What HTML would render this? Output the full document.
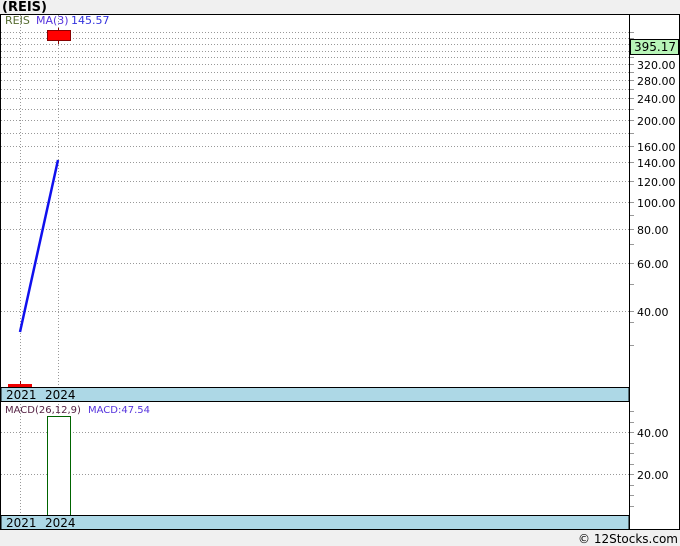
<!DOCTYPE html>
<html><head><meta charset="utf-8"><style>
html,body{margin:0;padding:0;background:#f0f0f0;}
svg{display:block;}
text{font-family:"DejaVu Sans","Liberation Sans",sans-serif;font-size:11px;}
</style></head><body>
<svg width="680" height="546" viewBox="0 0 680 546" xmlns="http://www.w3.org/2000/svg">
<rect x="0" y="0" width="680" height="546" fill="#f0f0f0"/>
<text x="2" y="11" style="font-size:13px;font-weight:bold" fill="#000">(REIS)</text>
<rect x="0.5" y="14.5" width="679" height="515" fill="#fff" stroke="#000"/>
<g stroke="#999" stroke-dasharray="1,2" stroke-width="1">
<line x1="1" x2="629" y1="32.5" y2="32.5"/><line x1="1" x2="629" y1="38.5" y2="38.5"/>
<line x1="1" x2="629" y1="44.5" y2="44.5"/><line x1="1" x2="629" y1="51.5" y2="51.5"/>
<line x1="1" x2="629" y1="57.5" y2="57.5"/><line x1="1" x2="629" y1="64.5" y2="64.5"/>
<line x1="1" x2="629" y1="72.5" y2="72.5"/><line x1="1" x2="629" y1="80.5" y2="80.5"/>
<line x1="1" x2="629" y1="89.5" y2="89.5"/><line x1="1" x2="629" y1="98.5" y2="98.5"/>
<line x1="1" x2="629" y1="109.5" y2="109.5"/><line x1="1" x2="629" y1="120.5" y2="120.5"/>
<line x1="1" x2="629" y1="133.5" y2="133.5"/><line x1="1" x2="629" y1="146.5" y2="146.5"/>
<line x1="1" x2="629" y1="162.5" y2="162.5"/><line x1="1" x2="629" y1="181.5" y2="181.5"/>
<line x1="1" x2="629" y1="202.5" y2="202.5"/><line x1="1" x2="629" y1="229.5" y2="229.5"/>
<line x1="1" x2="629" y1="263.5" y2="263.5"/><line x1="1" x2="629" y1="311.5" y2="311.5"/>
<line x1="1" x2="629" y1="432.5" y2="432.5"/><line x1="1" x2="629" y1="474.5" y2="474.5"/>
<line x1="20.5" x2="20.5" y1="15" y2="387"/><line x1="58.5" x2="58.5" y1="15" y2="387"/>
<line x1="20.5" x2="20.5" y1="401" y2="515"/><line x1="58.5" x2="58.5" y1="401" y2="515"/>
</g>
<g stroke="#999">
<path d="M629 32.5h5M629 38.5h5M629 44.5h5M629 51.5h5M629 57.5h5M629 64.5h5M629 72.5h5M629 80.5h5M629 89.5h5M629 98.5h5M629 109.5h5M629 120.5h5M629 133.5h5M629 146.5h5M629 162.5h5M629 181.5h5M629 202.5h5M629 215.5h5M629 229.5h5M629 244.5h5M629 263.5h5M629 284.5h5M629 311.5h5M629 345.5h5M629 322.5h5"/>
<path d="M629 411.5h5M629 422.5h5M629 432.5h5M629 443.5h5M629 453.5h5M629 464.5h5M629 474.5h5M629 485.5h5M629 495.5h5M629 506.5h5"/>
</g>
<line x1="629.5" y1="15" x2="629.5" y2="530" stroke="#000"/>
<text x="5" y="24" fill="#556b2f">REIS</text>
<text x="36" y="24" fill="#5533dd">MA(3)</text>
<text x="71" y="24" fill="#3333dd">145.57</text>
<line x1="58.5" y1="28" x2="58.5" y2="44" stroke="#800"/>
<rect x="47.5" y="30.5" width="23" height="10" fill="#f00" stroke="#800"/>
<line x1="20.5" y1="381" x2="20.5" y2="385" stroke="#800"/>
<rect x="8" y="384" width="24" height="3" fill="#e00"/>
<line x1="20" y1="332" x2="58" y2="160" stroke="#1010ee" stroke-width="2.5"/>
<rect x="630.5" y="39.5" width="48" height="15" fill="#b8f5b8" stroke="#000"/>
<text x="634" y="51" fill="#000" style="font-size:12px">395.17</text>
<g fill="#000" style="font-size:12px">
<text x="637" y="69">320.00</text><text x="637" y="85">280.00</text><text x="637" y="103">240.00</text>
<text x="637" y="125">200.00</text><text x="637" y="151">160.00</text><text x="637" y="167">140.00</text>
<text x="637" y="186">120.00</text><text x="637" y="207">100.00</text><text x="637" y="234">80.00</text>
<text x="637" y="268">60.00</text><text x="637" y="316">40.00</text>
<text x="637" y="437">40.00</text><text x="637" y="479">20.00</text>
</g>
<rect x="1" y="387.5" width="628" height="14" fill="#add8e6" stroke="#000"/>
<text x="6" y="399" fill="#000" style="font-size:12px">2021</text>
<text x="45" y="399" fill="#000" style="font-size:12px">2024</text>
<text x="5" y="413" fill="#552244" style="font-size:10px">MACD(26,12,9)</text>
<text x="88" y="413" fill="#5533dd" style="font-size:10px">MACD:47.54</text>
<rect x="47.5" y="416.5" width="23" height="99" fill="#fff" stroke="#006400"/>
<rect x="1" y="515.5" width="628" height="14" fill="#add8e6" stroke="#000"/>
<text x="6" y="527" fill="#000" style="font-size:12px">2021</text>
<text x="45" y="527" fill="#000" style="font-size:12px">2024</text>
<text x="678" y="543" text-anchor="end" fill="#000" style="font-size:12px">© 12Stocks.com</text>
</svg>
</body></html>
